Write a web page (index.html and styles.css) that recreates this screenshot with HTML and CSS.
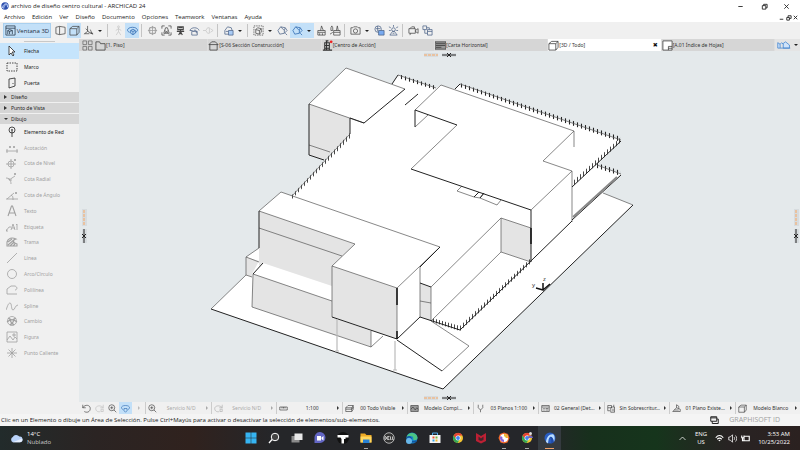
FILE: index.html
```html
<!DOCTYPE html>
<html lang="es">
<head>
<meta charset="utf-8">
<meta name="viewport" content="width=device-width, initial-scale=1">
<title>archivo de diseño centro cultural - ARCHICAD 24</title>
<link rel="stylesheet" href="styles.css">
</head>
<body>
<svg class="defs" aria-hidden="true">
  <symbol id="logo" viewBox="0 0 12 12"><circle cx="6" cy="6" r="5.5" fill="#2c4fae"/><path d="M2 9C3 4 6 2 9 3l1 5M4 10c0-4 2-6 4-6" stroke="#cfe0ff" stroke-width="1.3" fill="none"/></symbol>
  <symbol id="window3d" viewBox="0 0 12 12"><path d="M1 1h10v10H1zM1 3.5h10M3 10V6l2-1 3 1v4M3 6l2 1v3M5 7l3-1"/></symbol>
  <symbol id="persp" viewBox="0 0 12 12"><path d="M1 2.500l4-1v9l-4-1zM5 1.500l6 1v7l-6 1"/></symbol>
  <symbol id="cube" viewBox="0 0 12 12"><path d="M1 4l3-2.500h7v6.500L8.500 11H1zM1 4h7.500v7M8.500 4L11 1.500"/></symbol>
  <symbol id="axes" viewBox="0 0 12 12"><path d="M5 1v6L1 10M5 7l6 3M3 4l3 3M2 9.500h5M8 5l2 5M8 9h3"/></symbol>
  <symbol id="walk" viewBox="0 0 12 12"><circle cx="6" cy="2" r="1"/><path d="M6 3v4L3.500 11M6 7l2.500 4M3 6l3-2 3 2"/></symbol>
  <symbol id="orbit" viewBox="0 0 12 12"><path d="M3 8C-1 7 0 2.500 6 2.500s7 4.500 3 5.500M4 6l2.500-1.500L9 6v3l-2.500 1.500L4 9zM4 6l2.500 1L9 6M6.500 7v3.500"/></symbol>
  <symbol id="pan" viewBox="0 0 12 12"><path d="M3 7.500C-1 6 0 2 6 2s7 4 3 5.500M4 6h4v3l-2 2-2-2z"/></symbol>
  <symbol id="lookto" viewBox="0 0 12 12"><circle cx="6" cy="6" r="4"/><path d="M6 1v10M1 6h10M3 3h6v6H3z"/></symbol>
  <symbol id="fit" viewBox="0 0 12 12"><path d="M1 4V1h3M8 1h3v3M11 8v3H8M4 11H1V8M3 9l2-6h2l2 6zM4 6l4 3M8 6L4 9"/></symbol>
  <symbol id="person" viewBox="0 0 12 12"><path d="M3 2h6v3H3zM6 5v5M2 7h8M4 11l2-4 2 4M4 3h4" stroke-width="1.200"/></symbol>
  <symbol id="dome" viewBox="0 0 12 12"><path d="M1 6C2 2 10 2 11 6M3 7h6v4H3zM5 7c0-2 3-2 3 0v2M1 6h3"/></symbol>
  <symbol id="plane" viewBox="0 0 12 12"><path d="M0 6h3l2-3h2v6H5L3 6M8 4l3 2-3 2"/></symbol>
  <symbol id="copybox" viewBox="0 0 12 12"><path d="M2 6l3-4 4 1 1 3M2 6v4h4M3 7h3"/><path d="M6 6h5v5H6z" fill="#a9cbf5"/></symbol>
  <symbol id="marqueebox" viewBox="0 0 12 12"><path d="M1 1h10v10H1z" stroke-dasharray="1.500 1"/><path d="M3 9V5l2-2 4 1v4l-2 2zM3 5l4 1 2-2M7 6v4"/></symbol>
  <symbol id="house" viewBox="0 0 12 12"><path d="M1 6l3-4 5 1 2 3-3 3-5 1zM4 2l4 4v3M8 6l1-3M9 9l2 2"/></symbol>
  <symbol id="brush" viewBox="0 0 12 12"><path d="M2 6h8v5H2zM2 8h8M5 6l1-5 2 5M4 9v2M7 9v2"/></symbol>
  <symbol id="brushes" viewBox="0 0 12 12"><path d="M4 6h7v5H4zM4 8h7M7 6l1-5 1 5M1 3l1-2 1 2v3H1zM3 8L0 10"/></symbol>
  <symbol id="camera" viewBox="0 0 12 12"><path d="M1 3h2l1-1h4l1 1h2v7H1z"/><circle cx="6" cy="6.500" r="2.300"/></symbol>
  <symbol id="render" viewBox="0 0 12 12"><circle cx="4.500" cy="4.500" r="3.500"/><path d="M2 4h5M4 1v6"/><path d="M5 6h6v5H5z" fill="#78aaf0"/></symbol>
  <symbol id="sun" viewBox="0 0 12 12"><circle cx="6" cy="5" r="2"/><path d="M6 0v2M1 2l2 1M11 2L9 3M1 6h2M9 6h2M2 11l3-4h2l3 4zM5 9h2"/></symbol>
  <symbol id="video" viewBox="0 0 12 12"><path d="M1 4h7v5H1zM8 6l3-2v5L8 7M2 4l2-2h3v2M3 9l-1 2"/></symbol>
  <symbol id="link" viewBox="0 0 12 12"><path d="M1 1h4v4H1zM6 5h5v6H6zM6 7h5M3 5v4h3M5 3h3v2"/></symbol>
  <symbol id="grid4" viewBox="0 0 12 12"><path d="M1 1h4v4H1zM7 1h4v4H7zM1 7h4v4H1zM7 7h4v4H7z"/></symbol>
  <symbol id="folder" viewBox="0 0 12 12"><path d="M1 11V2h4l1 2h5v7z"/></symbol>
  <symbol id="section" viewBox="0 0 12 12"><path d="M1 5l3-3h4l3 3zM2 5v6h8V5"/></symbol>
  <symbol id="tower" viewBox="0 0 12 12"><path d="M3 3h5v8H3zM1 11h10M5 1v10M3 6h5M3 9h5M4 1h3" stroke-width="1.200"/><circle cx="10" cy="2" r="1.500" fill="#e22" stroke="none"/></symbol>
  <symbol id="card" viewBox="0 0 12 12"><path d="M0 2h12v8H0z" fill="#999"/><path d="M1 4h10M1 6h10M1 8h6"/></symbol>
  <symbol id="sheet" viewBox="0 0 12 12"><path d="M1 1h10v10H1z" fill="#fff"/><path d="M7 7h4M7 9h4M7 7v4"/></symbol>
  <symbol id="cloudhouse" viewBox="0 0 18 12"><path d="M1 10V3l3 2v5M4 5l2-2 2 2M8 10V4l3-2 5 4v4zM1 10h16" fill="#cfe3fa"/></symbol>
  <symbol id="arrow" viewBox="0 0 12 12"><path d="M3 1v9l2-2 2 3 1-1-2-3h3z" fill="#fff"/></symbol>
  <symbol id="marquee" viewBox="0 0 12 12"><path d="M1 2h10v8H1z" stroke-dasharray="1.500 1"/></symbol>
  <symbol id="door" viewBox="0 0 12 12"><path d="M3 2l6-1v8l-6 2zM7 6v1"/></symbol>
  <symbol id="node" viewBox="0 0 12 12"><circle cx="6" cy="4" r="3"/><circle cx="6" cy="4" r=".6"/><path d="M6 5v6"/></symbol>
  <symbol id="dim" viewBox="0 0 12 12"><path d="M0 9h12M1 7v4M11 7v4M3 4l2 2M5 4L3 6M7 4l2 2M9 4L7 6"/></symbol>
  <symbol id="level" viewBox="0 0 12 12"><circle cx="5" cy="7" r="3"/><path d="M0 7h10M5 2v10M8 2l2 2M10 2L8 4"/></symbol>
  <symbol id="radial" viewBox="0 0 12 12"><path d="M0 5c3 0 5 2 5 6M3 7l6-4M3 5v2h3M8 0l2 2M10 0L8 2"/></symbol>
  <symbol id="angle" viewBox="0 0 12 12"><path d="M0 10h12M1 10l7-6M5 6c2 1 2 2 2 5M9 3l2 2M11 3L9 5"/></symbol>
  <symbol id="text" viewBox="0 0 12 12"><path d="M2 11L5.500 1h1L10 11M3.500 8h5" stroke-width="1.100"/></symbol>
  <symbol id="label" viewBox="0 0 12 12"><path d="M0 10l3-4h2M0 8v2h2M5 9l2-6 2 6M6 7h3M10 4l1-1v6"/></symbol>
  <symbol id="hatch" viewBox="0 0 12 12"><path d="M1 10V6c1-4 5-5 9-3-4 1-3 4 1 5v2zM2 9l7-6M4 10l4-4M7 10l2-2M2 6l4-3" stroke-width="1.100"/></symbol>
  <symbol id="line" viewBox="0 0 12 12"><path d="M1 11L11 1"/></symbol>
  <symbol id="circle" viewBox="0 0 12 12"><circle cx="6" cy="6" r="4.500"/></symbol>
  <symbol id="poly" viewBox="0 0 12 12"><path d="M11 10H1V5l4-3h4c3 1 2 4 0 4"/></symbol>
  <symbol id="spline" viewBox="0 0 12 12"><path d="M0 10C1 8 2 3 4 3s1 7 3 7 2-5 5-5"/></symbol>
  <symbol id="change" viewBox="0 0 12 12"><circle cx="6" cy="6" r="4.500"/><path d="M2 3l4 2 4-2M1 7l3-2 2 4 2-4 3 2M4 10l2-2 2 2" stroke-width="1.200"/></symbol>
  <symbol id="figure" viewBox="0 0 12 12"><path d="M1 1h10v10H1zM1 9l3-4 3 4 2-3 2 2M7 3h2v2H7z"/></symbol>
  <symbol id="hot" viewBox="0 0 12 12"><path d="M6 1v10M1 6h10M2.500 2.500l7 7M9.500 2.500l-7 7"/></symbol>
  <symbol id="undo" viewBox="0 0 12 12"><path d="M1 1v4h4M1 5c3-5 10-4 10 1s-5 6-8 4"/></symbol>
  <symbol id="redo" viewBox="0 0 12 12"><path d="M11 1v4H7M11 5C8 1 1 2 1 6s4 5 6 4M8 7h3v3H8z"/></symbol>
  <symbol id="zoom" viewBox="0 0 12 12"><circle cx="5" cy="5" r="4"/><path d="M8 8l3 3M3 5h4M5 3v4"/></symbol>
  <symbol id="ruler" viewBox="0 0 12 12"><path d="M1 4h10v4H1zM4 4v2M6 4v2M8 4v2"/></symbol>
  <symbol id="layers" viewBox="0 0 12 12"><path d="M1 5l3-3h7L9 5zM1 5v5h8V5M9 10l2-3V2M1 7h8l2-3"/></symbol>
  <symbol id="model" viewBox="0 0 12 12"><path d="M1 2h10v8H1z" fill="#9a9a9a"/><path d="M1 7l3-3 3 4 2-3 2 2"/></symbol>
  <symbol id="pen" viewBox="0 0 12 12"><path d="M3 1v4l3 3 3-3V1M6 8v3"/></symbol>
  <symbol id="list" viewBox="0 0 12 12"><path d="M1 2h10v8H1zM1 4h10M3 6h2M6 6h4M3 8h2M6 8h4"/></symbol>
  <symbol id="override" viewBox="0 0 12 12"><path d="M1 2h5v3H1zM1 5v4h3M6 4h4v7H5V6zM7 7h2M7 9h2M9 1v3"/></symbol>
  <symbol id="reno" viewBox="0 0 12 12"><path d="M1 10h10V7L6 5zM6 5V1l3 2v3M3 8h6"/></symbol>
  <symbol id="stack" viewBox="0 0 12 12"><path d="M1 1h8v6H1zM3 7v3h8V4H9M1 2.500h8" stroke-width="1.300"/></symbol>
  <symbol id="chrome" viewBox="0 0 24 24"><circle cx="12" cy="12" r="10" fill="#f3c532"/><path d="M3.300 7A10 10 0 0 1 21 7H12L7 15z" fill="#e54335"/><path d="M3.300 7A10 10 0 0 0 11 22l5-8-8 0z" fill="#34a853"/><circle cx="12" cy="12" r="5" fill="#fff"/><circle cx="12" cy="12" r="3.800" fill="#4285f4"/></symbol>
</svg>

<div class="app">
  <header class="titlebar">
    <svg class="ico logo"><use href="#logo"/></svg>
    <h1>archivo de diseño centro cultural - ARCHICAD 24</h1>
    <div class="wincontrols">
      <button aria-label="Minimizar"><svg viewBox="0 0 8 8"><path d="M1.500 4h5"/></svg></button>
      <button aria-label="Restaurar"><svg viewBox="0 0 8 8"><path d="M1.500 3h4v4h-4zM3 3V1.500h4v4H5.500"/></svg></button>
      <button aria-label="Cerrar"><svg viewBox="0 0 8 8"><path d="M1.500 1.500l5 5M6.500 1.500l-5 5"/></svg></button>
    </div>
  </header>

  <nav class="menubar">
    <button>Archivo</button><button>Edición</button><button>Ver</button><button>Diseño</button><button>Documento</button><button>Opciones</button><button>Teamwork</button><button>Ventanas</button><button>Ayuda</button>
    <div class="doccontrols">
      <button aria-label="Minimizar documento"><svg viewBox="0 0 8 8"><path d="M2 6h4"/></svg></button>
      <button aria-label="Restaurar documento"><svg viewBox="0 0 8 8"><path d="M2 4h3v3H2zM3.500 3.500V2H7v3H5"/></svg></button>
      <button aria-label="Cerrar documento"><svg viewBox="0 0 8 8"><path d="M2 2l4 4M6 2L2 6"/></svg></button>
    </div>
  </nav>

  <div class="toolbar">
    <button class="view3d on"><svg class="ico"><use href="#window3d"/></svg>Ventana 3D</button>
    <button class="tb" aria-label="Perspectiva"><svg class="ico"><use href="#persp"/></svg></button>
    <button class="tb on" aria-label="Axonometría"><svg class="ico"><use href="#cube"/></svg></button>
    <button class="tb" aria-label="Proyección"><svg class="ico"><use href="#axes"/></svg></button>
    <button class="caret" aria-label="Más proyecciones"></button>
    <i class="sep"></i>
    <button class="tb off" aria-label="Caminar"><svg class="ico"><use href="#walk"/></svg></button>
    <button class="tb on blue" aria-label="Órbita"><svg class="ico"><use href="#orbit"/></svg></button>
    <i class="sep"></i>
    <button class="tb dim" aria-label="Mirar a"><svg class="ico"><use href="#lookto"/></svg></button>
    <button class="tb" aria-label="Ajustar"><svg class="ico"><use href="#fit"/></svg></button>
    <button class="tb" aria-label="Observador"><svg class="ico"><use href="#person"/></svg></button>
    <button class="tb slate" aria-label="Restablecer"><svg class="ico"><use href="#dome"/></svg></button>
    <button class="tb off" aria-label="Plano"><svg class="ico"><use href="#plane"/></svg></button>
    <i class="sep"></i>
    <button class="tb slate" aria-label="Filtrar"><svg class="ico"><use href="#copybox"/></svg></button>
    <button class="caret" aria-label="Más filtros"></button>
    <i class="sep"></i>
    <button class="tb" aria-label="Selección 3D"><svg class="ico"><use href="#marqueebox"/></svg></button>
    <button class="caret" aria-label="Más selección"></button>
    <button class="tb slate" aria-label="Corte"><svg class="ico"><use href="#house"/></svg></button>
    <button class="tb on blue push" aria-label="Estilo 3D"><svg class="ico"><use href="#house"/></svg></button>
    <button class="caret on" aria-label="Más estilos"></button>
    <button class="tb" aria-label="Pintar"><svg class="ico"><use href="#brush"/></svg></button>
    <button class="tb" aria-label="Pintar todo"><svg class="ico"><use href="#brushes"/></svg></button>
    <i class="sep"></i>
    <button class="tb" aria-label="Foto"><svg class="ico"><use href="#camera"/></svg></button>
    <button class="caret" aria-label="Más foto"></button>
    <button class="tb slate" aria-label="Render"><svg class="ico"><use href="#render"/></svg></button>
    <button class="tb slate" aria-label="Sol"><svg class="ico"><use href="#sun"/></svg></button>
    <i class="sep"></i>
    <button class="tb" aria-label="Vuelo"><svg class="ico"><use href="#video"/></svg></button>
    <button class="tb slate" aria-label="Vincular"><svg class="ico"><use href="#link"/></svg></button>
  </div>

  <div class="workspace">
    <aside class="toolbox">
      <button class="tool selected"><svg class="ico"><use href="#arrow"/></svg>Flecha</button>
      <button class="tool"><svg class="ico"><use href="#marquee"/></svg>Marco</button>
      <button class="tool"><svg class="ico"><use href="#door"/></svg>Puerta</button>
      <button class="group">Diseño</button>
      <button class="group">Punto de Vista</button>
      <button class="group open">Dibujo</button>
      <div class="drawtools">
        <button class="tool"><svg class="ico"><use href="#node"/></svg>Elemento de Red</button>
        <button class="tool" disabled><svg class="ico"><use href="#dim"/></svg>Acotación</button>
        <button class="tool" disabled><svg class="ico"><use href="#level"/></svg>Cota de Nivel</button>
        <button class="tool" disabled><svg class="ico"><use href="#radial"/></svg>Cota Radial</button>
        <button class="tool" disabled><svg class="ico"><use href="#angle"/></svg>Cota de Ángulo</button>
        <button class="tool" disabled><svg class="ico"><use href="#text"/></svg>Texto</button>
        <button class="tool" disabled><svg class="ico"><use href="#label"/></svg>Etiqueta</button>
        <button class="tool" disabled><svg class="ico"><use href="#hatch"/></svg>Trama</button>
        <button class="tool" disabled><svg class="ico"><use href="#line"/></svg>Línea</button>
        <button class="tool" disabled><svg class="ico"><use href="#circle"/></svg>Arco/Círculo</button>
        <button class="tool" disabled><svg class="ico"><use href="#poly"/></svg>Polilínea</button>
        <button class="tool" disabled><svg class="ico"><use href="#spline"/></svg>Spline</button>
        <button class="tool" disabled><svg class="ico"><use href="#change"/></svg>Cambio</button>
        <button class="tool" disabled><svg class="ico"><use href="#figure"/></svg>Figura</button>
        <button class="tool" disabled><svg class="ico"><use href="#hot"/></svg>Punto Caliente</button>
      </div>
    </aside>

    <main class="document">
      <nav class="tabs">
        <button class="tabgrid" aria-label="Vista de pestañas"><svg class="ico"><use href="#grid4"/></svg></button>
        <button class="tab"><svg class="ico"><use href="#folder"/></svg>[1. Piso]</button>
        <button class="tab"><svg class="ico"><use href="#section"/></svg>[S-06 Sección Construcción]</button>
        <button class="tab"><svg class="ico"><use href="#tower"/></svg>[Centro de Acción]</button>
        <button class="tab"><svg class="ico"><use href="#card"/></svg>[Carta Horizontal]</button>
        <button class="tab active"><svg class="ico"><use href="#cube"/></svg>[3D / Todo]<span class="close">✖</span></button>
        <button class="tab"><svg class="ico"><use href="#sheet"/></svg>[A.01 Índice de Hojas]</button>
        <button class="tabend" aria-label="Organizador"><svg class="wide"><use href="#cloudhouse"/></svg><span class="down"></span></button>
      </nav>

      <svg class="viewport" viewBox="79 51 721 351" role="img" aria-label="Modelo 3D del centro cultural">
        <defs>
          <pattern id="posts" width="4" height="8" patternUnits="userSpaceOnUse"><path d="M1.500 0v8" stroke="#222" stroke-width="1.100"/></pattern>
          <pattern id="densePosts" width="3" height="8" patternUnits="userSpaceOnUse"><path d="M1.500 0v8" stroke="#333" stroke-width=".9"/></pattern>
        </defs>
        <path fill="#fff" d="M211 309L246 275V257L259 248V211L281 192 292 196 350 134V118L309 104 346 68 392 84 398 75 436 88 441 85 455 89 460 84 621 140 597 165 621 174 603 193 633 205 443 389z"/>
        <!-- shaded walls -->
        <g fill="#e4e4e4">
          <path d="M309 104L350 118V134L324 160 309 155z"/>
          <path d="M259 211L355 244 332 266V286L263 263 259 266z"/>
          <path d="M246 257L259 261 252 274V277L246 275z"/>
          <path d="M253 274L332 301V317L371 331V347L252 307z"/>
          <path d="M332 266L397 288V339L332 317z"/>
          <path d="M420 283L431 287V321L420 317z"/>
          <path d="M501 218L531 228V262L501 252z"/>
        </g>
        <!-- railings -->
        <g fill="url(#posts)">
          <path d="M398 74L436 86V90L398 78zM460 83L621 137V142L460 87z"/>
          <path d="M597 163L621 171V176L597 168z"/>
        </g>
        <g fill="url(#densePosts)">
          <path d="M350 133L292 195V199L350 138zM621 137L572 182V187L621 142z"/>
          <path d="M432 318L460 326 531 258V263L460 331 432 322z"/>
        </g>
        <!-- thin edges -->
        <g class="thin">
          <path d="M309 104L346 68 405 89M309 104L364 123M309 145L330 152"/>
          <path d="M415 110L441 85 574 131 543 161 572 171 531 210M457 125L411 169M574 131V147M572 171V222M415 127L428 115"/>
          <path d="M398 75L436 88M460 84L621 140M597 165L621 174M603 193L633 205M350 134L292 196"/>
          <path d="M259 211L281 192 440 247M259 211L355 244 332 266 397 288 440 247M259 228L342 256"/>
          <path d="M259 248L246 257 259 262M246 257V275L252 277M211 309L246 275"/>
          <path d="M253 274L332 301M253 274L252 307 371 347V331M371 347L383 336"/>
          <path d="M332 266V317M397 288V339M420 267V317M420 301L431 303M431 287V321M431 287L501 218 531 228M501 218V252L531 262M501 252L431 321M431 321L469 346 442 371"/>
          <path d="M462 186L457 191 474 197 479 192M484 193L480 198 497 205 501 200M474 197L480 198"/>
        </g>
        <!-- heavy edges -->
        <g class="thick">
          <path d="M309 104V155L324 160M350 118V134M350 118L364 123 405 89M392 84L398 75M405 105L418 94"/>
          <path d="M457 125L415 110V127M411 169L531 210V262M455 89L460 84M621 141L572 187M621 175L572 220M474 197L479 192M480 198L484 193"/>
          <path d="M259 211V248M263 263L253 274M332 317L397 339 420 317 460 330 572 221M397 340L442 371M420 283L431 287M420 267L440 247"/>
          <path d="M211 309L443 389 633 205"/>
        </g>
        <path class="bold" d="M397 288V305M397 331V339M531 228V244"/>
        <path d="M617 177L573 217" stroke="#888" stroke-width="2" fill="none"/>
        <path d="M337 319V351M335 351H339M395 341V370M393 370H397" stroke="#bbb" stroke-width="1.200" fill="none"/>
        <!-- origin -->
        <path class="bold" d="M543 283V290L536 288M543 290L550 284"/>
        <text class="axis" x="543" y="281">z</text><text class="axis" x="532" y="287">y</text>
        <!-- edge handles -->
        <g fill="#d7dcdf"><path d="M424 53H438V57H424zM442 53H456V57H442zM424 396H438V400H424zM442 396H456V400H442zM82 209H87V226H82zM82 229H87V243H82zM794 209H799V226H794zM794 229H799V243H794z"/></g>
        <path d="M424 55H438M424 398H438M84 210V226M796 210V226" stroke="#efb98c" stroke-width="1.500" stroke-dasharray="3 1" fill="none"/>
        <path class="thick" d="M442 55H456M442 398H456M84 229V243M796 229V243M447 53L451 57M451 53L447 57M447 396L451 400M451 396L447 400M82 234L86 238M86 234L82 238M794 234L798 238M798 234L794 238"/>
      </svg>

      <div class="viewbar">
        <div class="navcell">
          <button aria-label="Anterior"><svg class="ico"><use href="#undo"/></svg></button>
          <button class="off" aria-label="Siguiente"><svg class="ico"><use href="#redo"/></svg></button>
          <button aria-label="Acercar"><svg class="ico"><use href="#zoom"/></svg></button>
          <button class="on blue" aria-label="Orbitar"><svg class="ico"><use href="#pan"/></svg></button>
          <button class="off" aria-label="Explorar"><span class="more"></span></button>
        </div>
        <button class="cell faded"><svg class="ico"><use href="#zoom"/></svg><span class="value">Servicio N/D</span><span class="more"></span></button>
        <button class="cell faded all"><svg class="ico"><use href="#redo"/></svg><span class="value">Servicio N/D</span><span class="more"></span></button>
        <button class="cell"><svg class="ico"><use href="#ruler"/></svg><span class="value">1:100</span><span class="more"></span></button>
        <button class="cell"><svg class="ico"><use href="#layers"/></svg><span class="value">00 Todo Visible</span><span class="more"></span></button>
        <button class="cell"><svg class="ico"><use href="#model"/></svg><span class="value">Modelo Compl...</span><span class="more"></span></button>
        <button class="cell"><svg class="ico"><use href="#pen"/></svg><span class="value">03 Planos 1:100</span><span class="more"></span></button>
        <button class="cell"><svg class="ico"><use href="#list"/></svg><span class="value">02 General (Det...</span><span class="more"></span></button>
        <button class="cell"><svg class="ico"><use href="#override"/></svg><span class="value">Sin Sobrescritur...</span><span class="more"></span></button>
        <button class="cell"><svg class="ico"><use href="#reno"/></svg><span class="value">01 Plano Existe...</span><span class="more"></span></button>
        <button class="cell"><svg class="ico"><use href="#cube"/></svg><span class="value">Modelo Blanco</span><span class="more"></span></button>
      </div>
    </main>
  </div>

  <footer class="status">
    <p>Clic en un Elemento o dibuje un Área de Selección. Pulse Ctrl+Mayús para activar o desactivar la selección de elementos/sub-elementos.</p>
    <svg class="ico"><use href="#stack"/></svg>
    <span class="brand">GRAPHISOFT ID</span>
  </footer>

  <div class="taskbar">
    <button class="weather">
      <svg viewBox="0 0 14 10"><path d="M3 9.500a3 3 0 0 1 0-5.500 4 4 0 0 1 7-.500 3 3 0 0 1 1 6z" fill="#b9d3fa"/><path d="M3 9.500h8a3 3 0 0 0 2-4z" fill="#e6effe"/></svg>
      <span>14°C<br><span class="soft">Nublado</span></span>
    </button>
    <div class="apps">
      <button aria-label="Inicio"><svg viewBox="0 0 24 24"><path d="M1 1h10.500v10.500H1zM12.500 1H23v10.500H12.500zM1 12.500h10.500V23H1zM12.500 12.500H23V23H12.500z" fill="#36b4f2"/></svg></button>
      <button aria-label="Buscar"><svg viewBox="0 0 24 24"><circle cx="14" cy="10" r="7.500" fill="#444" stroke="#fff" stroke-width="2"/><path d="M8 15l-6 7" stroke="#fff" stroke-width="2.500"/></svg></button>
      <button aria-label="Vista de tareas"><svg viewBox="0 0 24 24"><path d="M1 8h16v13H1z" fill="#8b8b8b"/><path d="M7 3h16v13H7z" fill="#e8e8e8"/></svg></button>
      <button aria-label="Chat"><svg viewBox="0 0 24 24"><path d="M1 22V12a11 11 0 1 1 11 10z" fill="#6366c4"/><path d="M6 8h8v9H6zM15 11l4-3v9l-4-3z" fill="#fff"/></svg></button>
      <button aria-label="Aplicación T"><svg viewBox="0 0 24 24"><circle cx="12" cy="12" r="12" fill="#111"/><path d="M1 6h22v5h-6v3h-3v9h-5v-9l-2-3H1z" fill="#fff"/></svg></button>
      <button class="running" aria-label="Explorador"><svg viewBox="0 0 24 24"><path d="M1 3h9l3 3h10v15H1z" fill="#edaa25"/><path d="M1 9h22v12H1z" fill="#ffd75e"/><path d="M6 15h13v7H6z" fill="#2881d4"/></svg></button>
      <button aria-label="Dell"><svg viewBox="0 0 24 24"><circle cx="12" cy="12" r="10.500" fill="#333" stroke="#ddd" stroke-width="1.500"/><path d="M4 9v6c4 0 4-6 0-6M13 9H9l-1 3 1 3h4M9 12h3M15 9v6h2M19 9v6h2" stroke="#eee" stroke-width="1.500" fill="none"/></svg></button>
      <button aria-label="Edge"><svg viewBox="0 0 24 24"><circle cx="12" cy="12" r="11" fill="#1688d0"/><path d="M1 11C3-1 21-1 23 11c0 7-9 6-9 3 3-4-5-9-13-3z" fill="#4cc583"/><path d="M1 12c5-5 10-2 9 3s5 6 11 3" stroke="#12559d" stroke-width="3" fill="none"/><circle cx="6" cy="18" r="6" fill="#68b7e9"/></svg></button>
      <button aria-label="Tienda"><svg viewBox="0 0 24 24"><path d="M7 6V2h10v4" stroke="#4da6e8" stroke-width="2" fill="none"/><path d="M1 6h22v16H1z" fill="#f5f5f5"/><path d="M7 9h4v4H7z" fill="#ee5135"/><path d="M13 9h4v4h-4z" fill="#78b943"/><path d="M7 15h4v4H7z" fill="#31a4e8"/><path d="M13 15h4v4h-4z" fill="#f4b927"/></svg></button>
      <button aria-label="Chrome"><svg><use href="#chrome"/></svg></button>
      <button aria-label="McAfee"><svg viewBox="0 0 24 24"><path d="M2 2l10 6 10-6v16l-10 5-10-5z" fill="#bd2034"/><path d="M7 9v7l5 2 5-2V9l-5 4z" fill="#44252b"/></svg></button>
      <button class="running" aria-label="Chrome, perfil 1"><svg viewBox="0 0 24 24"><path d="M12 1l8 3 3 8-4 9-7 2-7-2-4-9 3-8z" fill="#f46b2d"/><circle cx="12" cy="12" r="8" fill="#fff"/><path d="M12 4a8 8 0 0 1 8 8h-8z" fill="#edb72d"/><path d="M12 20a8 8 0 0 1-7-12l7 4z" fill="#8b62d5"/><circle cx="12" cy="12" r="3.500" fill="#fff"/></svg></button>
      <button class="running" aria-label="Chrome, perfil 2"><svg viewBox="0 0 24 24"><use href="#chrome" width="24" height="24"/><circle cx="19" cy="3" r="3" fill="#ddd"/><path d="M13 12c0-7 11-7 11 0z" fill="#7568b8"/></svg></button>
      <button class="current" aria-label="ARCHICAD"><svg viewBox="0 0 24 24"><circle cx="12" cy="12" r="11" fill="#285dc2"/><path d="M4 20C5 9 12 3 19 5c3 3 3 10 1 15-1-8-5-12-8-10s-3 7-4 13z" fill="#b8dcff"/><path d="M12 10c5-1 7 5 7 11l-5 2c1-5 1-9-2-13z" fill="#204ba7"/></svg></button>
    </div>
    <div class="tray">
      <button aria-label="Iconos ocultos"><svg viewBox="0 0 12 12"><path d="M2 8l4-4 4 4"/></svg></button>
      <button class="lang">ENG<br>US</button>
      <button class="quick" aria-label="Red, sonido y batería">
        <svg viewBox="0 0 12 12"><path d="M1 5c3-4 7-4 10 0M3 7c2-2 4-2 6 0M5 9c1-1 1-1 2 0" stroke-width="1.500"/></svg>
        <svg viewBox="0 0 12 12"><path d="M1 4h2l3-3v10L3 8H1zM8 4c1 1 1 3 0 4M10 2c2 2 2 6 0 8"/></svg>
        <svg viewBox="0 0 12 12"><path d="M4 3h7v6H4zM1 2v3h3V2M2 5v4h4" stroke-width="1.500"/></svg>
      </button>
      <button class="clock">3:53 AM<br>10/25/2022</button>
    </div>
  </div>
</div>
</body>
</html>
```

FILE: styles.css
```css
*, *::before, *::after { box-sizing: border-box; }
body {
  margin: 0;
  font: 6px/8px "Open Sans", "Noto Sans", sans-serif;
  color: #222;
  background: #fff;
}
button {
  margin: 0;
  padding: 0;
  border: 0;
  background: none;
  color: inherit;
  font: inherit;
  display: flex;
  align-items: center;
  justify-content: center;
  white-space: nowrap;
}
h1, p { margin: 0; font: inherit; }
svg { flex: none; fill: none; stroke: currentColor; }
.defs { display: none; }
.ico { width: 11px; height: 11px; stroke-width: .8; }
.on { background: #c3e0f8; }
.blue { color: #2664ae; }

.app {
  min-height: 100vh;
  display: grid;
  grid-template-rows: 12px 10px 17px 1fr 12px 24px;
}

/* Title and menus */
.titlebar { display: flex; align-items: center; padding-left: 1px; gap: 2px; }
.logo { width: 8px; height: 8px; stroke: none; }
.wincontrols, .doccontrols { margin-left: auto; display: flex; }
.wincontrols button { width: 24px; }
.wincontrols svg { width: 7px; height: 7px; }
.wincontrols button:last-child { padding-right: 4px; }
.menubar { display: flex; align-items: center; padding-left: 4px; gap: 7px; }
.doccontrols { padding-right: 1px; }
.doccontrols button { width: 7px; }
.doccontrols svg { width: 7px; height: 7px; stroke-width: 1; }

/* Main toolbar */
.toolbar { display: flex; align-items: center; background: #f0f0f0; padding-left: 3px; color: #444; }
.toolbar button { height: 15px; }
.view3d { width: 48px; gap: 1px; margin-right: 2px; color: #1d2c3d; border: 1px solid #a9d0ef; }
.tb { width: 14px; }
.tb.off { color: #c5c5c5; }
.tb.dim { color: #999; }
.tb.slate { color: #4a6287; }
.tb.blue { color: #2664ae; }
.push { margin-left: 1px; }
.caret { width: 10px; }
.caret::after, .down { content: ""; border: 2px solid transparent; border-top: 2px solid #222; border-bottom: 0; }
.sep { width: 1px; height: 13px; margin: 0 3px 0 2px; background: #c4c4c4; }

/* Toolbox */
.workspace { display: grid; grid-template-columns: 79px 1fr; }
.toolbox { background: #f0f0f0; font-family: "Noto Sans", "Open Sans", sans-serif; font-size: 5px; display: flex; flex-direction: column; }
.toolbox::before { content: ""; width: 31px; height: 4px; margin-left: 24px; background: linear-gradient(#f0f0f0 2px, #c8c8c8 2px 3px, #f0f0f0 3px); }
.tool { width: 100%; height: 16px; padding-left: 6px; justify-content: flex-start; gap: 6px; }
.tool .ico { width: 12px; height: 12px; }
.tool:disabled { color: #a0a0a0; }
.selected { background: #c5e4fc; }
.group { height: 10px; margin-top: 1px; padding-left: 4px; gap: 4px; justify-content: flex-start; background: #d5d5d5; }
.group::before { content: ""; border: 2px solid transparent; border-left: 3px solid #333; border-right: 0; }
.group.open::before { border: 2px solid transparent; border-top: 2px solid #333; border-bottom: 0; }
.group.open { gap: 3px; }
.drawtools { height: 237px; display: grid; grid-template-rows: repeat(15, 1fr); }
.drawtools .tool { height: auto; }

/* Document area */
.document { display: grid; grid-template-rows: 12px 1fr 12px; background: #e4e9eb; min-width: 0; }
.tabs { display: grid; grid-template-columns: 16px repeat(6, 1fr) 25px; background: #d6d6d6; font-family: "Noto Sans", "Open Sans", sans-serif; font-size: 5px; }
.tab { justify-content: flex-start; color: #333; border-right: 1px solid #dedede; }
.tab.active { background: #fff; }
.close { margin-left: auto; padding-right: 3px; font-family: "DejaVu Sans", sans-serif; font-size: 6px; color: #111; }
.tabgrid { color: #666; }
.tabend { background: #e4e4e4; color: #3f83cf; gap: 3px; }
.wide { width: 14px; height: 10px; }
.viewport { width: 100%; height: 100%; stroke: none; }
.thin { stroke: #555; stroke-width: .7; fill: none; }
.thick { stroke: #222; stroke-width: 1; fill: none; }
.bold { stroke: #111; stroke-width: 1.5; fill: none; }
.axis { font-size: 6px; fill: #222; }

/* View options */
.viewbar { display: grid; grid-template-columns: 66px repeat(10, 1fr); background: #f0f0f0; font-family: "Noto Sans", "Open Sans", sans-serif; font-size: 5px; color: #333; }
.navcell { display: flex; padding-left: 1px; }
.navcell button { width: 13px; }
.navcell .off { color: #bbb; }
.navcell .blue { color: #2664ae; }
.viewbar .ico { width: 9px; height: 9px; }
.cell { border-left: 1px solid #ccc; padding: 0 3px 0 2px; min-width: 0; }
.value { flex: 1; text-align: center; overflow: hidden; }
.more { border: 2px solid transparent; border-left: 2px solid currentColor; border-right: 0; }
.faded .value, .faded .more, .faded.all { color: #a9a9a9; }

/* Status line */
.status { display: flex; align-items: center; background: #f4f4f4; padding: 0 20px 0 1px; }
.status p { margin-right: auto; white-space: nowrap; }
.status .ico { width: 9px; height: 9px; margin-right: 10px; }
.brand { color: #a0a0a0; font-size: 7px; }

/* Taskbar */
.taskbar {
  display: grid;
  grid-template-columns: 1fr auto 1fr;
  color: #fff;
  background: linear-gradient(90deg, #222b2b 0, #2b2423 12%, #30221e 24%, #252629 34%, #25262a 68%, #17301c 74%, #16351c 82%, #282323 91%, #2b2120 100%);
}
.taskbar svg { width: 12px; height: 12px; stroke: none; }
.weather { justify-self: start; padding-left: 10px; gap: 4px; text-align: left; }
.taskbar .weather svg { width: 13px; height: 10px; }
.soft { color: #c8c8c8; }
.apps { display: flex; }
.apps button { width: 23px; position: relative; }
.running::after, .current::after { content: ""; position: absolute; bottom: 1px; width: 4px; height: 1px; background: #aaa; }
.current { background: #353b40; }
.current::after { width: 9px; background: #f0a26b; }
.tray { justify-self: end; display: flex; align-items: center; padding-right: 10px; gap: 8px; }
.taskbar .tray svg { width: 9px; height: 9px; stroke: currentColor; }
.lang { text-align: center; }
.quick { gap: 4px; }
.clock { text-align: right; }
```
